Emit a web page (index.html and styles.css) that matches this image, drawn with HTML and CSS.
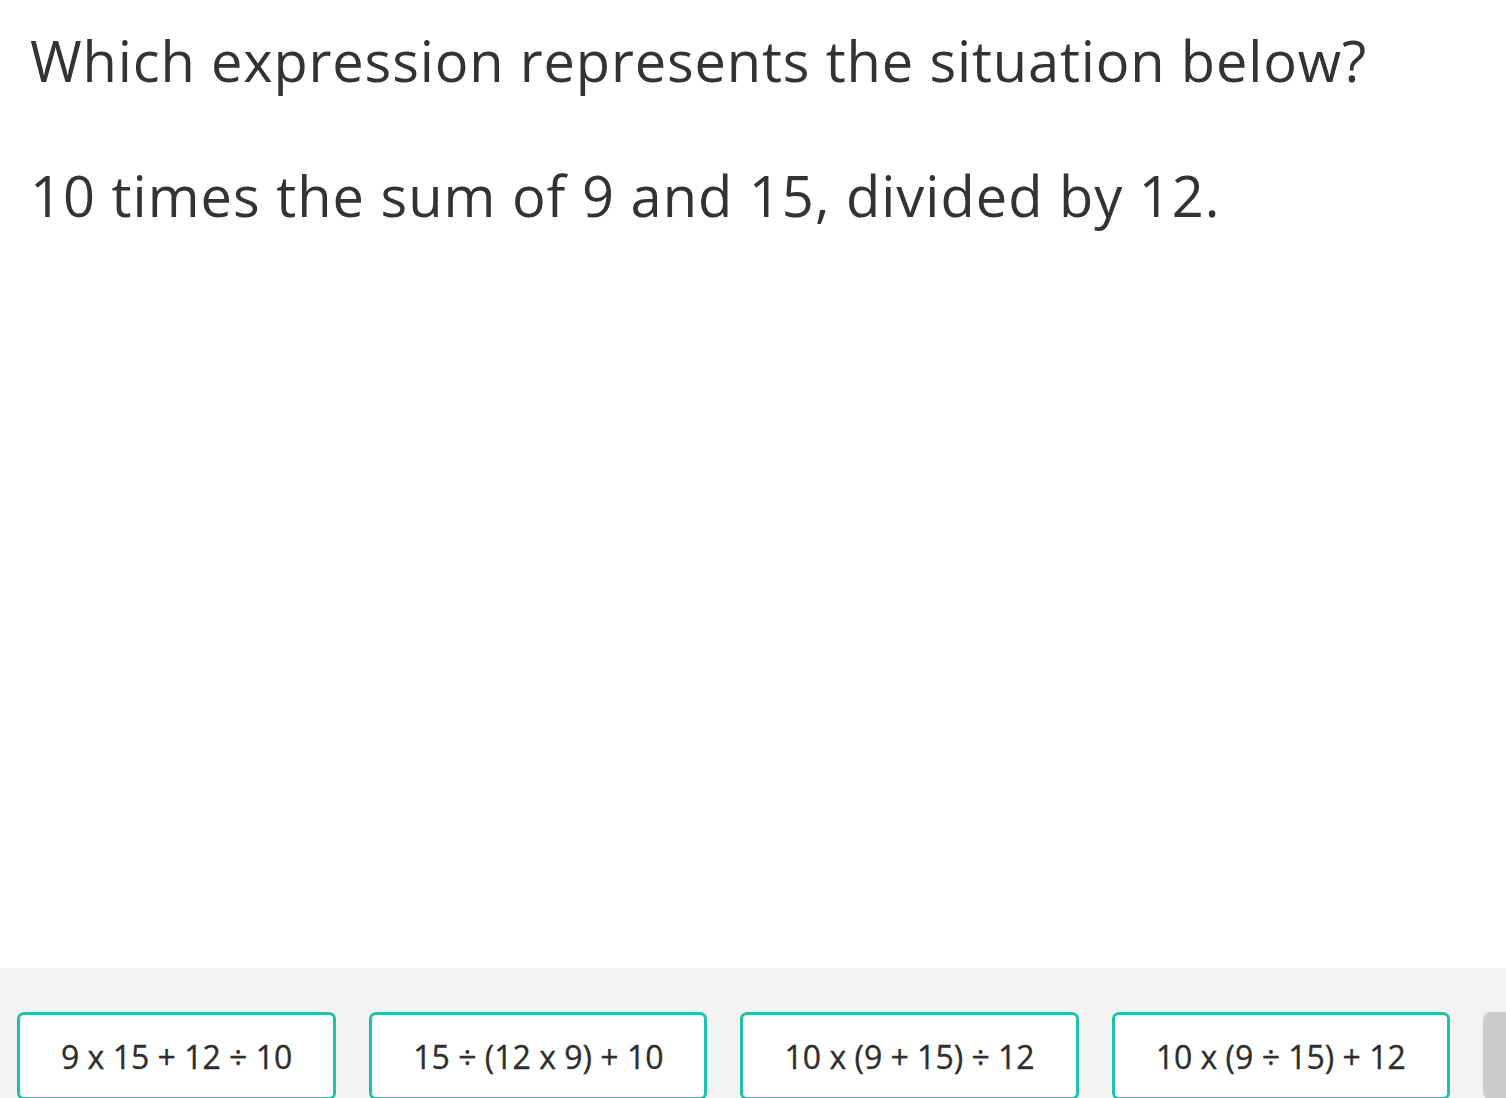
FILE: index.html
```html
<!DOCTYPE html>
<html lang="en">
<head>
<meta charset="utf-8">
<title>Question</title>
<link rel="stylesheet" href="styles.css">
</head>
<body>
<div class="page">
  <main class="question">
    <p class="prompt">Which expression represents the situation below?</p>
    <p class="situation">10 times the sum of 9 and 15, divided by 12.</p>
  </main>
  <footer class="answers">
    <button class="choice">9 x 15 + 12 ÷ 10</button>
    <button class="choice">15 ÷ (12 x 9) + 10</button>
    <button class="choice">10 x (9 + 15) ÷ 12</button>
    <button class="choice">10 x (9 ÷ 15) + 12</button>
    <div class="choice-placeholder"></div>
  </footer>
</div>
</body>
</html>
```
FILE: styles.css
```css
html, body {
  margin: 0;
  padding: 0;
  background: #ffffff;
  overflow: hidden;
}
body {
  font-family: "Open Sans", "Noto Sans", sans-serif;
  color: #333333;
}
.page {
  width: 1506px;
  height: 1098px;
  display: flex;
  flex-direction: column;
}
.question {
  flex: 1;
  padding: 22px 30px 0;
}
.prompt, .situation {
  margin: 0;
  font-size: 56px;
  line-height: 76px;
}
.prompt {
  letter-spacing: 0.85px;
}
.situation {
  margin-top: 59px;
  letter-spacing: 1px;
}
.answers {
  height: 130px;
  background: #f3f3f3;
  display: flex;
  gap: 33px;
  padding: 44px 0 0 17px;
  box-sizing: border-box;
  overflow: hidden;
}
.choice {
  flex: none;
  margin: 0;
  height: 88px;
  padding: 0 41px;
  border: 3px solid #1fc1aa;
  border-radius: 7px;
  background: #ffffff;
  font-family: "Open Sans", "Noto Sans", sans-serif;
  font-size: 32px;
  font-weight: 400;
  color: #2e2e2e;
  -webkit-text-stroke: 0.35px #2e2e2e;
}
.choice-placeholder {
  flex: none;
  width: 120px;
  height: 88px;
  border-radius: 8px;
  background: #cccccc;
}
```
